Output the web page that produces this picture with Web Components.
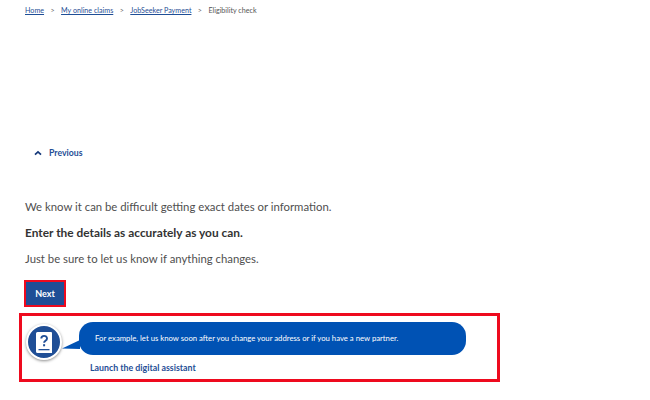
<!DOCTYPE html>
<html lang="en">
<head>
<meta charset="utf-8">
<title>Eligibility check</title>
<style>
  html, body { margin: 0; background: #fff; }
  body { font-family: Lato, "Noto Sans", sans-serif; width: 650px; height: 400px; overflow: hidden; }
</style>
</head>
<body>
<claim-breadcrumb>
  <a href="#">Home</a>
  <a href="#">My online claims</a>
  <a href="#">JobSeeker Payment</a>
  <span>Eligibility check</span>
</claim-breadcrumb>
<claim-previous>Previous</claim-previous>
<claim-copy>
  <p>We know it can be difficult getting exact dates or information.</p>
  <p class="strong">Enter the details as accurately as you can.</p>
  <p>Just be sure to let us know if anything changes.</p>
</claim-copy>
<claim-next>Next</claim-next>
<claim-assistant link="Launch the digital assistant">For example, let us know soon after you change your address or if you have a new partner.</claim-assistant>

<script>
  const define = (name, html, init) => {
    customElements.define(name, class extends HTMLElement {
      constructor() {
        super();
        this.attachShadow({mode: "open"}).innerHTML = html;
        if (init) { init(this); }
      }
    });
  };

  define("claim-breadcrumb", `
    <style>
      :host { display: block; height: 22px; padding: 4px 0 0 25px; box-sizing: border-box; font-size: 7.15px; line-height: 13px; color: #555; }
      .row { display: flex; }
      .sep { width: 17px; text-align: center; color: #666; }
      ::slotted(a) { color: #1f4e96; }
    </style>
    <div class="row"></div>
    <slot hidden></slot>`, (el) => {
      // separators go between the slotted items, so name a slot for each
      const row = el.shadowRoot.querySelector(".row");
      [...el.children].forEach((child, i) => {
        child.slot = "s" + i;
        if (i) { row.insertAdjacentHTML("beforeend", `<span class="sep">&gt;</span>`); }
        row.insertAdjacentHTML("beforeend", `<slot name="s${i}"></slot>`);
      });
    });

  define("claim-previous", `
    <style>
      :host { display: flex; align-items: center; gap: 7px; margin: 122px 0 0 34px; height: 17px; font-size: 8.7px; font-weight: 700; color: #1f4e96; }
      svg { display: block; }
    </style>
    <svg width="8" height="6" viewBox="0 0 8 6"><path d="M1 4.6 4 1.8 7 4.6" fill="none" stroke="#14387a" stroke-width="1.7"/></svg>
    <slot></slot>`);

  define("claim-copy", `
    <style>
      :host { display: flex; flex-direction: column; gap: 9px; margin: 37px 0 0 25px; font-size: 11.35px; line-height: 17px; color: #4f4f4f; }
      ::slotted(p) { margin: 0; display: block; }
      ::slotted(.strong) { font-size: 11.9px; font-weight: 700; color: #333; }
    </style>
    <slot></slot>`);

  define("claim-next", `
    <style>
      :host { display: block; width: 42px; height: 27px; margin: 13px 0 0 24px; box-sizing: border-box; border: 2px solid #ee0a1e; background: #1f4e96; color: #fff; font-size: 9px; font-weight: 700; line-height: 23px; text-align: center; }
    </style>
    <slot></slot>`);

  define("claim-assistant", `
    <style>
      :host { display: block; width: 481px; height: 69px; margin: 6px 0 0 19px; box-sizing: border-box; border: 3px solid #ee0a1e; padding: 6px 0 0 4px; }
      .top { display: flex; align-items: flex-start; }
      .avatar { width: 36px; height: 36px; box-sizing: border-box; flex: none; border-radius: 50%; background: #1f4e96; border: 2px solid #fff; box-shadow: 0 1px 3px rgba(0,0,0,.45); display: flex; align-items: center; justify-content: center; margin-top: 2px; position: relative; z-index: 1; }
      .tail { flex: none; width: 18px; height: 16px; margin: 12px -1px 0 0; }
      .bubble { width: 387px; height: 33px; box-sizing: border-box; padding-left: 16px; border-radius: 14px; background: #0052b4; color: #fff; font-size: 7.72px; line-height: 33px; white-space: nowrap; }
      .link { display: block; margin: 1px 0 0 64px; font-size: 8.8px; font-weight: 700; line-height: 14px; color: #1f4e96; }
    </style>
    <div class="top">
      <div class="avatar">
        <svg width="16" height="21" viewBox="0 0 16 21">
          <path d="M1.5 0H15a1 1 0 0 1 1 1v20H1.5A1.5 1.5 0 0 1 0 19.5V1.5A1.5 1.5 0 0 1 1.5 0z" fill="#fff"/>
          <path d="M2.5 17h11v1.3h-11z" fill="#1f4e96"/>
          <path d="M5.3 6.6C5.3 3 11 3 11 6.4c0 2.4-2.9 2.3-2.9 4.4" fill="none" stroke="#1f4e96" stroke-width="1.9"/>
          <path d="M7.1 12.2h2v2.1h-2z" fill="#1f4e96"/>
        </svg>
      </div>
      <svg class="tail" viewBox="0 0 18 16"><path d="M0 14.5 18 6v9z" fill="#0052b4"/></svg>
      <div class="bubble"><slot></slot></div>
    </div>
    <a class="link"></a>`, (el) => {
      el.shadowRoot.querySelector(".link").textContent = el.getAttribute("link") || "Launch the digital assistant";
    });
</script>
</body>
</html>
